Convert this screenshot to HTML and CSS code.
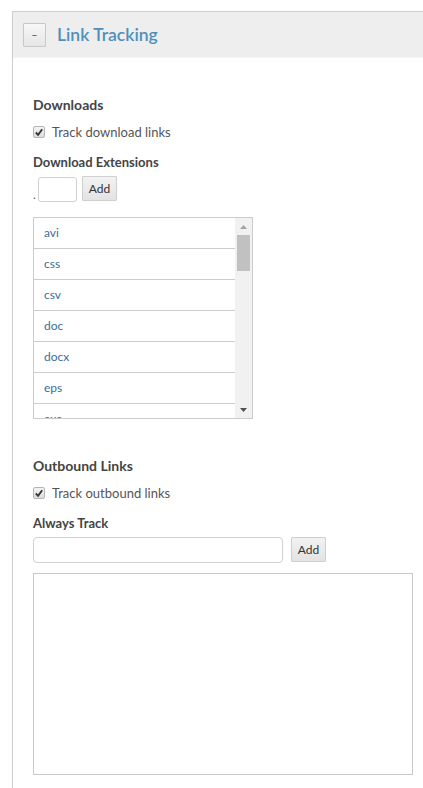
FILE: index.html
```html
<!DOCTYPE html>
<html>
<head>
<meta charset="utf-8">
<link rel="stylesheet" href="styles.css">
</head>
<body>
<div class="panel">
  <div class="panel-header">
    <button class="toggle">–</button>
    <h2 class="panel-title">Link Tracking</h2>
  </div>
  <div class="panel-body">
    <h3 class="section-title">Downloads</h3>
    <label class="check-row">
      <span class="checkbox"><svg width="11" height="11" viewBox="0 0 11 11"><path d="M2 5.5 L4.5 8 L9 2" fill="none" stroke="#333" stroke-width="2"/></svg></span>
      <span>Track download links</span>
    </label>
    <div class="field-label">Download Extensions</div>
    <div class="ext-row">
      <span class="dot">.</span>
      <input class="ext-input" type="text">
      <button class="btn">Add</button>
    </div>
    <div class="listbox">
      <ul class="list-items">
        <li>avi</li>
        <li>css</li>
        <li>csv</li>
        <li>doc</li>
        <li>docx</li>
        <li>eps</li>
        <li>exe</li>
      </ul>
      <div class="scrollbar">
        <div class="arrow"><svg width="7" height="4" viewBox="0 0 7 4"><path d="M0 4 L3.5 0 L7 4 Z" fill="#a3a3a3"/></svg></div>
        <div class="thumb"></div>
        <div class="track"></div>
        <div class="arrow"><svg width="7" height="4" viewBox="0 0 7 4"><path d="M0 0 L3.5 4 L7 0 Z" fill="#505050"/></svg></div>
      </div>
    </div>

    <h3 class="section-title section-gap">Outbound Links</h3>
    <label class="check-row">
      <span class="checkbox"><svg width="11" height="11" viewBox="0 0 11 11"><path d="M2 5.5 L4.5 8 L9 2" fill="none" stroke="#333" stroke-width="2"/></svg></span>
      <span>Track outbound links</span>
    </label>
    <div class="field-label">Always Track</div>
    <div class="track-row">
      <input class="track-input" type="text">
      <button class="btn">Add</button>
    </div>
    <div class="textarea"></div>
  </div>
</div>
</body>
</html>
```

FILE: styles.css
```css
* { box-sizing: border-box; }
html, body { margin: 0; padding: 0; background: #fff; }
body {
  font-family: Lato, "Liberation Sans", sans-serif;
  color: #444;
  height: 788px;
  overflow: hidden;
}
.panel {
  margin: 11px 0 0 12px;
  border-top: 1px solid #cdcdcd;
  border-left: 1px solid #cdcdcd;
  min-height: 777px;
}
.panel-header {
  height: 46px;
  background: #eeeeee;
  display: flex;
  align-items: center;
  padding-left: 10px;
  border-bottom: 1px solid #f6f6f6;
}
.toggle {
  width: 23px;
  height: 24px;
  padding: 0;
  margin: 0;
  border: 1px solid #c8c8c8;
  border-radius: 1px;
  background: linear-gradient(#f7f7f7, #e6e6e6);
  font-family: Lato, sans-serif;
  font-size: 11px;
  color: #555;
  line-height: 20px;
}
.panel-title {
  margin: 0 0 0 11px;
  font-size: 17.5px;
  font-weight: 600;
  color: #4e8fbb;
  line-height: 24px;
}
.panel-body {
  padding: 37px 0 0 20px;
}
.section-title {
  margin: 0;
  font-size: 14px;
  font-weight: 700;
  color: #444;
  line-height: 20px;
}
.section-gap { margin-top: 37px; }
.check-row {
  display: flex;
  align-items: center;
  margin-top: 8px;
  height: 18px;
  font-size: 13px;
  color: #555;
}
.checkbox {
  width: 12px;
  height: 12px;
  border: 1px solid #b5b5b5;
  border-radius: 2px;
  background: linear-gradient(#f4f4f4, #dcdcdc);
  display: flex;
  align-items: center;
  justify-content: center;
  margin-right: 7px;
}
.field-label {
  margin-top: 12px;
  font-size: 13px;
  font-weight: 700;
  line-height: 18px;
  color: #444;
}
.ext-row {
  display: flex;
  align-items: flex-start;
  margin-top: 5px;
  height: 26px;
}
.dot {
  font-size: 12px;
  line-height: 12px;
  margin-top: 13px;
  width: 5px;
  color: #555;
}
.ext-input {
  width: 39px;
  height: 25px;
  margin: 1px 0 0 0;
  border: 1px solid #d0d0d0;
  border-radius: 3px;
  padding: 0;
}
.btn {
  width: 35px;
  height: 25px;
  margin: 0 0 0 5px;
  padding: 0;
  border: 1px solid #cfcfcf;
  border-radius: 1px;
  background: linear-gradient(#f2f2f2, #e3e3e3);
  font-family: Lato, sans-serif;
  font-size: 12px;
  color: #333;
}
.listbox {
  margin-top: 15px;
  width: 220px;
  height: 202px;
  border: 1px solid #cccccc;
  display: flex;
  overflow: hidden;
}
.list-items {
  list-style: none;
  margin: 0;
  padding: 0;
  flex: 1;
  overflow: hidden;
}
.list-items li {
  height: 31px;
  line-height: 30px;
  border-bottom: 1px solid #cccccc;
  padding-left: 10px;
  font-size: 12px;
  color: #3b6e96;
}
.scrollbar {
  width: 17px;
  background: #f1f1f1;
  display: flex;
  flex-direction: column;
}
.arrow {
  height: 17px;
  display: flex;
  align-items: center;
  justify-content: center;
}
.thumb {
  margin: 0 2px;
  height: 36px;
  background: #c1c1c1;
}
.track { flex: 1; }
.track-row {
  display: flex;
  margin-top: 5px;
  height: 26px;
}
.track-input {
  width: 250px;
  height: 26px;
  border: 1px solid #d0d0d0;
  border-radius: 4px;
  margin: 0;
  padding: 0;
}
.track-row .btn { margin-left: 8px; }
.textarea {
  margin-top: 10px;
  width: 380px;
  height: 202px;
  border: 1px solid #c8c8c8;
}
```
